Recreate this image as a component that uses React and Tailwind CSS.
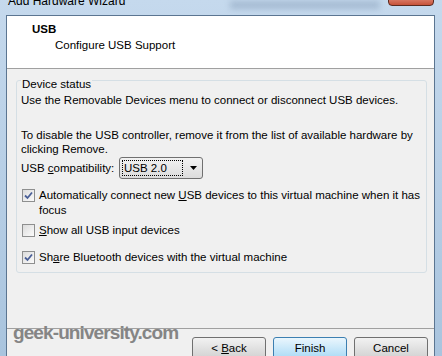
import React from 'react';

const Check = ({ checked }) => (
    <span className="w-[13px] h-[13px] border border-[#8e8f8f] bg-gradient-to-br from-[#dcdcdc] to-[#fbfbfb] flex items-center justify-center shrink-0 ml-[1px]">
        {checked && (
            <svg width="9" height="9" viewBox="0 0 9 9">
                <path d="M1 4.5 L3.5 7 L8 1.5" stroke="#4a5f97" strokeWidth="1.8" fill="none" />
            </svg>
        )}
    </span>
);

const Btn = ({ children, primary }) => (
    <button className={`w-[74px] h-[23px] rounded-[3px] border text-[11.5px] text-black shrink-0 ${primary ? 'border-[#3c7fb1] bg-gradient-to-b from-[#eaf6fd] to-[#a7d9f5]' : 'border-[#707070] bg-gradient-to-b from-[#f2f2f2] to-[#d0d0d0]'}`}>
        {children}
    </button>
);

export default function App() {
    return (
        <div className="w-[442px] h-[356px] overflow-hidden bg-gradient-to-b from-[#c5d9ed] to-[#a9c4de] flex flex-col relative" style={{ fontFamily: '"Liberation Sans", Arial, sans-serif' }}>
            {/* title bar */}
            <div className="h-[15px] shrink-0 relative">
                <div className="absolute left-[8px] top-[-6px] text-[12px] leading-[14px] text-black whitespace-nowrap">Add Hardware Wizard</div>
                <div className="absolute left-[230px] top-[1px] w-[150px] h-[8px] bg-[#8fa6c0] blur-[3px] opacity-60" />
                <div className="absolute left-[388px] top-[-4px] w-[46px] h-[10px] rounded-b-[4px] border border-[#5b2a20] bg-gradient-to-b from-[#e08a78] to-[#c6523a]" />
            </div>

            <div className="flex-1 flex pl-[6px] pr-[7px] min-h-0">
                <div className="flex-1 flex flex-col border-l border-r border-t border-[#5b7591] bg-[#f0f0f0] text-[11.5px] text-black">
                    {/* header */}
                    <div className="h-[53px] bg-white border-b border-[#a0a0a0] shrink-0 pt-[6px] pl-[25px]">
                        <div className="font-bold leading-[14px]">USB</div>
                        <div className="pl-[23px] leading-[14px] mt-[2px]">Configure USB Support</div>
                    </div>

                    {/* body */}
                    <div className="pl-[9px] pr-[7px] pt-[11px] whitespace-nowrap">
                        <div className="relative border border-[#d5dfe5] rounded-[3px] h-[193px] pl-[4px] pt-[12px] leading-[14px]">
                            <div className="absolute left-[4px] top-[-4px] bg-[#f0f0f0] px-[1px]">Device status</div>
                            <div>Use the Removable Devices menu to connect or disconnect USB devices.</div>
                            <div className="mt-[21px]">To disable the USB controller, remove it from the list of available hardware by<br />clicking Remove.</div>
                            <div className="flex items-center mt-[1px]">
                                <span className="w-[98px]">USB <u>c</u>ompatibility:</span>
                                <div className="w-[84px] h-[22px] rounded-[3px] border border-[#707070] bg-gradient-to-b from-[#f2f2f2] to-[#dcdcdc] flex items-center pl-[2px] pr-[5px]">
                                    <span className="border border-dotted border-black px-[1px] w-[61px] h-[16px] leading-[14px]">USB 2.0</span>
                                    <svg width="7" height="4" viewBox="0 0 7 4" className="ml-auto"><path d="M0 0 H7 L3.5 4 Z" fill="#000" /></svg>
                                </div>
                            </div>
                            <div className="flex items-start gap-[4px] mt-[9px]">
                                <span className="mt-[1px]"><Check checked /></span>
                                <span className="leading-[15px]">Automatically connect new <u>U</u>SB devices to this virtual machine when it has<br />focus</span>
                            </div>
                            <div className="flex items-center gap-[4px] mt-[5px]">
                                <Check />
                                <span><u>S</u>how all USB input devices</span>
                            </div>
                            <div className="flex items-center gap-[4px] mt-[13px]">
                                <Check checked />
                                <span>Sh<u>a</u>re Bluetooth devices with the virtual machine</span>
                            </div>
                        </div>
                    </div>

                    <div className="flex-1" />

                    {/* footer */}
                    <div className="h-[28px] border-t border-[#a0a0a0] shrink-0 relative flex justify-end gap-[7px] pr-[6px] pt-[8px]">
                        <div className="absolute left-[6px] top-[-7px] text-[19px] font-bold text-[#858585] tracking-[-0.9px] leading-[22px] whitespace-nowrap">geek-university.com</div>
                        <Btn>&lt; <u>B</u>ack</Btn>
                        <Btn primary>Finish</Btn>
                        <Btn>Cancel</Btn>
                    </div>
                </div>
            </div>
        </div>
    );
}
